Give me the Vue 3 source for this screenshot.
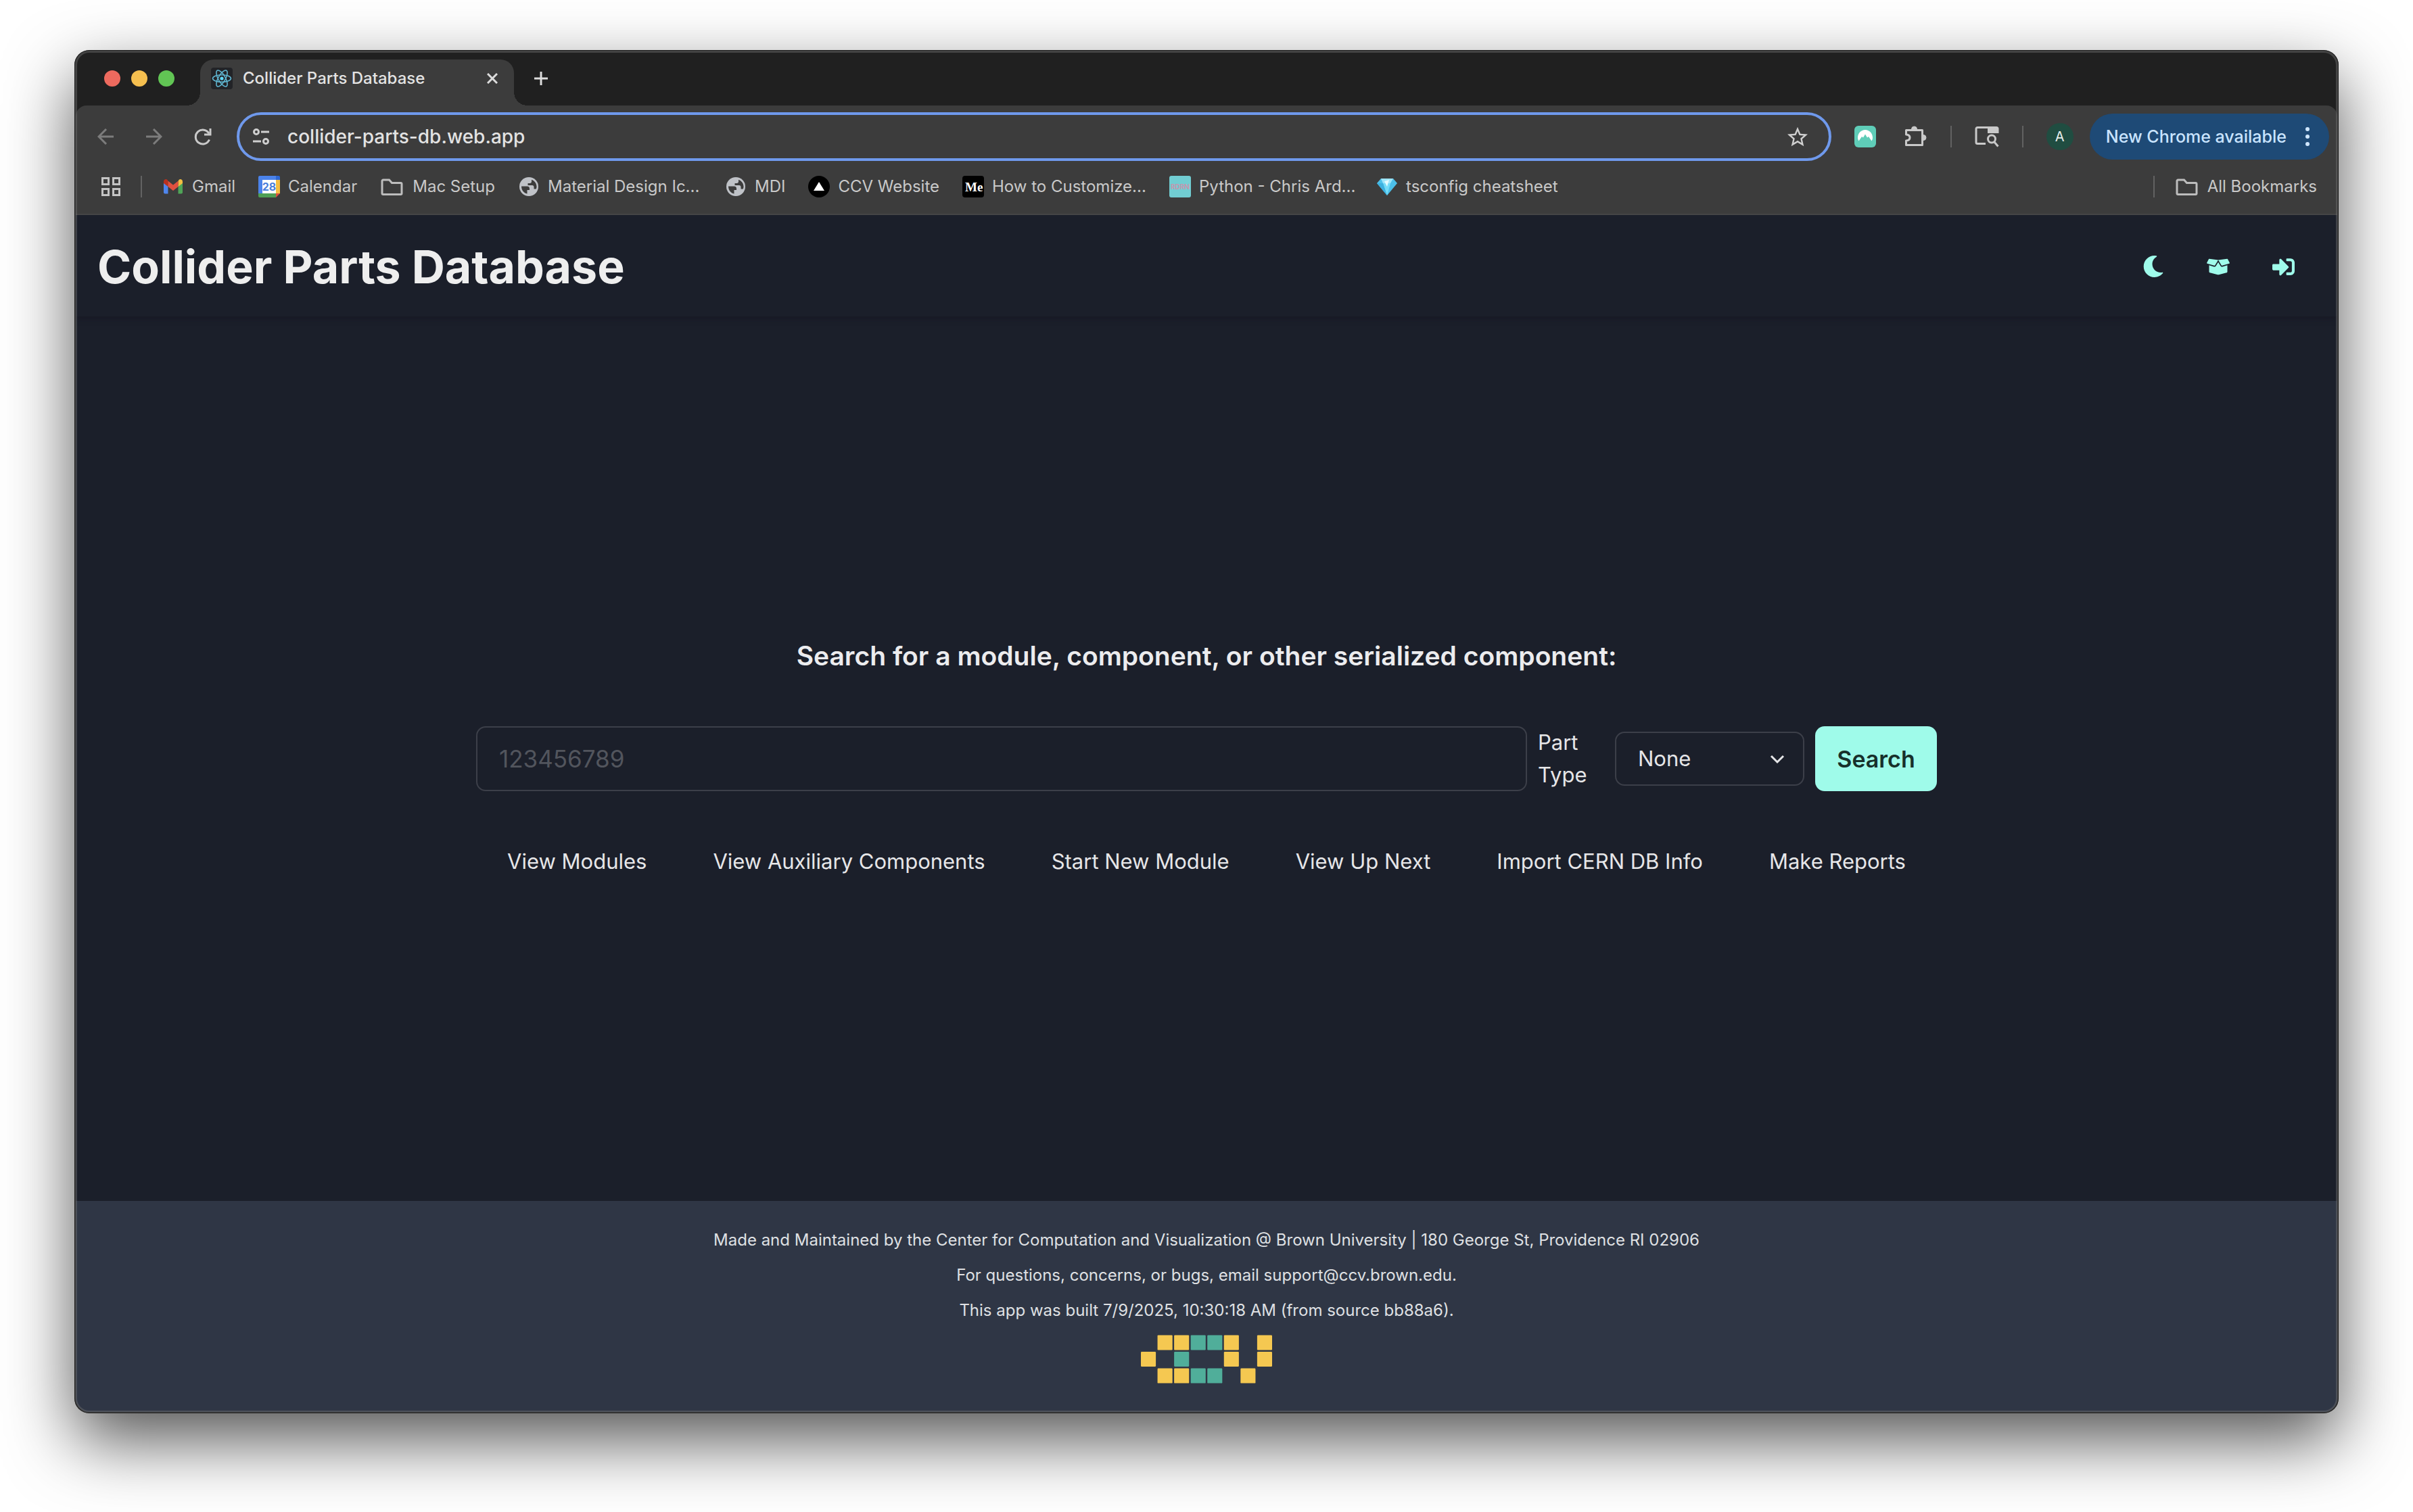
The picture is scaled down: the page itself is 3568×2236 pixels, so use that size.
<script setup>
import { ref } from 'vue'

const address = ref('collider-parts-db.web.app')
const serial = ref('')
const partType = ref('None')

const bookmarks = [
  { icon: 'gmail', label: 'Gmail' },
  { icon: 'calendar', label: 'Calendar' },
  { icon: 'folder', label: 'Mac Setup' },
  { icon: 'globe', label: 'Material Design Ic...', long: true },
  { icon: 'globe', label: 'MDI' },
  { icon: 'ccv', label: 'CCV Website' },
  { icon: 'medium', label: 'How to Customize...', long: true },
  { icon: 'ardrn', label: 'Python - Chris Ard...', long: true },
  { icon: 'gem', label: 'tsconfig cheatsheet' }
]

const links = [
  'View Modules',
  'View Auxiliary Components',
  'Start New Module',
  'View Up Next',
  'Import CERN DB Info',
  'Make Reports'
]

// Logo mosaic: y = yellow tile, t = teal tile, . = empty
const mosaic = ['.yytty.y', 'y.t..y.y', '.yytt.y.']
const tiles = mosaic.flatMap((row, r) =>
  [...row].map((kind, c) => ({ kind, x: c * 10, y: r * 10 })).filter((t) => t.kind !== '.')
)
</script>

<template>
  <div class="desktop">
    <div class="window">
      <div class="tab-strip">
        <div class="lights">
          <button class="light close" aria-label="Close window"></button>
          <button class="light minimise" aria-label="Minimise window"></button>
          <button class="light zoom" aria-label="Zoom window"></button>
        </div>
        <div class="tab">
          <svg class="favicon" viewBox="0 0 32 32">
            <rect width="32" height="32" rx="4" fill="#222327" />
            <g fill="none" stroke="#5fb4cf" stroke-width="1.6">
              <ellipse cx="16" cy="16" rx="13.5" ry="5.2" transform="rotate(0 16 16)" />
              <ellipse cx="16" cy="16" rx="13.5" ry="5.2" transform="rotate(60 16 16)" />
              <ellipse cx="16" cy="16" rx="13.5" ry="5.2" transform="rotate(120 16 16)" />
            </g>
            <circle cx="16" cy="16" r="2.6" fill="#61dafb" />
          </svg>
          <span class="tab-title">Collider Parts Database</span>
          <button class="plain tab-close" aria-label="Close tab">
            <svg width="16" height="16" viewBox="0 0 16 16"><path d="M1 1l14 14M15 1L1 15" stroke="#dcdcdc" stroke-width="3" /></svg>
          </button>
        </div>
        <button class="plain new-tab" aria-label="New tab">
          <svg width="20" height="20" viewBox="0 0 20 20"><path d="M10 0v20M0 10h20" stroke="#dcdcdc" stroke-width="3" /></svg>
        </button>
      </div>

      <div class="toolbar">
        <div class="nav-row">
          <button class="plain nav" aria-label="Back">
            <svg width="24" height="24" viewBox="0 0 24 24" fill="none" stroke="#7c7c7c" stroke-width="3"><path d="M24 12H2M13 1L2 12l11 11" /></svg>
          </button>
          <button class="plain nav" aria-label="Forward">
            <svg width="24" height="24" viewBox="0 0 24 24" fill="none" stroke="#7c7c7c" stroke-width="3"><path d="M0 12h22M11 1l11 11-11 11" /></svg>
          </button>
          <button class="plain nav" aria-label="Reload">
            <svg width="26" height="26" viewBox="0 0 26 26" fill="none" stroke="#c9c9c9" stroke-width="3"><path d="M22.500 17.500A10.500 10.500 0 1 1 22 8.500" /><path d="M24 1v9h-9" /></svg>
          </button>
          <div class="omnibox">
            <svg width="24" height="24" viewBox="0 0 24 24" fill="none" stroke="#cfcfcf" stroke-width="3">
              <circle cx="5" cy="5" r="3.500" /><path d="M12 5h12M0 19h12" /><circle cx="19" cy="19" r="3.500" />
            </svg>
            <input v-model="address" class="address" type="text" aria-label="Address" />
            <button class="plain" aria-label="Bookmark this tab">
              <svg width="30" height="30" viewBox="2 1.500 20 20" fill="#cfcfcf"><path d="M22 9.240l-7.190-.62L12 2 9.190 8.630 2 9.240l5.460 4.730L5.820 21 12 17.270 18.180 21l-1.630-7.030L22 9.240zM12 15.400l-3.760 2.270 1-4.280-3.320-2.880 4.380-.38L12 6.100l1.710 4.040 4.380.38-3.320 2.880 1 4.280L12 15.400z" /></svg>
            </button>
          </div>
          <div class="extensions">
            <button class="plain ext" aria-label="Extension">
              <svg width="32" height="32" viewBox="0 0 32 32"><rect width="32" height="32" rx="6" fill="#5fcdb8" /><path d="M5 17.500C5 11 10 6 16 6s11 5 11 11.500c0 2-.6 3.500-1.500 5L21 16l-2 1.500-3-5-3 5-2-1.500-4.500 6.500C5.600 21 5 19.500 5 17.500z" fill="#fff" /></svg>
            </button>
            <button class="plain puzzle" aria-label="Extensions">
              <svg width="34" height="34" viewBox="0 0 34 34"><path d="M3.500 7.500h24v22h-24v-6.500q5.500-.5 5.500-4.500t-5.500-4.500z" fill="none" stroke="#c9c9c9" stroke-width="3" stroke-linejoin="round" /><path d="M11.500 6a4 4 0 0 1 8 0zM29 14.500a4 4 0 0 1 0 8z" fill="#c9c9c9" stroke="#c9c9c9" /></svg>
            </button>
            <span class="divider"></span>
            <button class="plain" aria-label="Side panel">
              <svg width="36" height="32" viewBox="0 0 36 32"><path d="M16 26.500H4a2 2 0 0 1-2-2V4.500a2 2 0 0 1 2-2h28a2 2 0 0 1 2 2V11" fill="none" stroke="#c9c9c9" stroke-width="3" /><path d="M19 2h15v9H19z" fill="#c9c9c9" /><circle cx="25" cy="19.500" r="5.500" fill="none" stroke="#c9c9c9" stroke-width="3" /><path d="M28.500 23.500l6 7" stroke="#c9c9c9" stroke-width="3" /></svg>
            </button>
            <span class="divider"></span>
            <button class="avatar" aria-label="Profile">A</button>
          </div>
          <button class="update">
            New Chrome available
            <svg width="16" height="30" viewBox="0 0 16 30" fill="#cfe6ff"><circle cx="8" cy="4" r="3" /><circle cx="8" cy="15" r="3" /><circle cx="8" cy="26" r="3" /></svg>
          </button>
        </div>

        <div class="bookmark-row">
          <button class="plain" aria-label="Tab groups">
            <svg width="28" height="28" viewBox="0 0 28 28" fill="none" stroke="#c4c4c4" stroke-width="3"><path d="M1.500 1.500h9v9h-9zM17.500 1.500h9v9h-9zM1.500 17.500h9v9h-9zM17.500 17.500h9v9h-9z" /></svg>
          </button>
          <span class="divider"></span>
          <nav class="bookmarks">
            <a v-for="b in bookmarks" :key="b.label" href="#" class="bookmark">
              <svg v-if="b.icon === 'gmail'" class="ico" viewBox="0 0 32 32">
                <path d="M2 9v15.500a2 2 0 0 0 2 2h4.500V13.500z" fill="#4f86ec" />
                <path d="M30 9v15.500a2 2 0 0 1-2 2h-4.500V13.500z" fill="#4fa457" />
                <path d="M23.500 8v8l6.500-5V8.500c0-3.200-3.500-4.500-5.500-2.500z" fill="#f2bf42" />
                <path d="M2 8.500V11l6.500 5V8L7.500 6C5.500 4 2 5.300 2 8.500z" fill="#b9311f" />
                <path d="M8.500 7.500v8.500l7.500 6 7.500-6V7.500L16 13.500z" fill="#e0503f" />
              </svg>
              <svg v-else-if="b.icon === 'calendar'" class="ico" viewBox="0 0 32 32">
                <path d="M2 0h24v6H0V2a2 2 0 0 1 2-2z" fill="#4b83ea" />
                <path d="M26 0h4a2 2 0 0 1 2 2v4h-6z" fill="#2d67d2" />
                <path d="M0 6h6v20H0z" fill="#4b83ea" />
                <path d="M26 6h6v20h-6z" fill="#f4bd42" />
                <path d="M0 26h26v6H2a2 2 0 0 1-2-2z" fill="#4e9f55" />
                <path d="M26 26h6l-6 6z" fill="#dd4f3f" />
                <path d="M6 6h20v20H6z" fill="#fff" />
                <text x="16" y="22" text-anchor="middle" font-size="16" font-weight="700" fill="#4b7fdc">28</text>
              </svg>
              <svg v-else-if="b.icon === 'folder'" class="ico wide" viewBox="0 0 36 32">
                <path d="M4.500 6h9l4 4.500h13a1.500 1.500 0 0 1 1.500 1.500v14a1.500 1.500 0 0 1-1.500 1.500h-26A1.500 1.500 0 0 1 3 26V7.500A1.500 1.500 0 0 1 4.500 6z" fill="none" stroke="#bdbdbd" stroke-width="3" />
              </svg>
              <svg v-else-if="b.icon === 'globe'" class="ico" viewBox="0 0 32 32">
                <circle cx="16" cy="16" r="14" fill="#bfc2c7" />
                <path d="M5 15.500h8.500c2.500 0 3.500 1.500 3.500 3.500v2h-3.500v5.500C8.500 25.500 5 21 5 15.500z" fill="#3c3c3c" />
                <path d="M20 5.800v2.700c0 1.500-1 2.500-2.500 2.500h-3v3h6.500c1.500 0 2.500 1 2.500 2.500v3h3.200c.7-1.500.8-2.500.8-3.500 0-4.600-3-8.600-7.500-10.200z" fill="#3c3c3c" />
              </svg>
              <svg v-else-if="b.icon === 'ccv'" class="ico" viewBox="0 0 32 32">
                <circle cx="16" cy="16" r="16" fill="#000" />
                <path d="M16 9l8 13H8z" fill="#fff" />
              </svg>
              <svg v-else-if="b.icon === 'medium'" class="ico" viewBox="0 0 32 32">
                <rect width="32" height="32" rx="4" fill="#000" />
                <text class="serif" x="4" y="23" font-size="19" font-weight="700" fill="#fff">Me</text>
              </svg>
              <svg v-else-if="b.icon === 'ardrn'" class="ico" viewBox="0 0 32 32">
                <rect width="32" height="32" rx="3" fill="#71cdd2" />
                <text x="16" y="20" text-anchor="middle" font-size="10" font-weight="700" fill="#c795ae">RDRN</text>
              </svg>
              <svg v-else class="ico" viewBox="0 0 32 32">
                <path d="M7 4h18l6 7-15 18L1 11z" fill="#4cc0ea" />
                <path d="M7 4h18l-4 7H10z" fill="#9fe6fb" />
                <path d="M10 11h11l-5 18z" fill="#74dcf8" />
                <path d="M1 11h9l6 18z" fill="#3cb1e0" />
                <path d="M12 8l7-2-3 10z" fill="#e4fbff" />
              </svg>
              <span :class="{ long: b.long }">{{ b.label }}</span>
            </a>
          </nav>
          <span class="divider"></span>
          <a href="#" class="bookmark">
            <svg class="ico wide" viewBox="0 0 36 32">
              <path d="M4.500 6h9l4 4.500h13a1.500 1.500 0 0 1 1.500 1.500v14a1.500 1.500 0 0 1-1.500 1.500h-26A1.500 1.500 0 0 1 3 26V7.500A1.500 1.500 0 0 1 4.500 6z" fill="none" stroke="#bdbdbd" stroke-width="3" />
            </svg>
            <span>All Bookmarks</span>
          </a>
        </div>
      </div>

      <div class="page">
        <header class="header">
          <h1>Collider Parts Database</h1>
          <div class="actions">
            <button class="plain action" aria-label="Toggle theme">
              <svg width="32" height="32" viewBox="0 0 512 512"><path d="M283.211 512c78.962 0 151.079-35.925 198.857-94.792 7.068-8.708-.639-21.430-11.562-19.350-124.203 23.654-238.262-71.576-238.262-196.954 0-72.222 38.662-138.635 101.498-174.394 9.686-5.512 7.250-20.197-3.756-22.230A258.156 258.156 0 0 0 283.211 0c-141.309 0-256 114.511-256 256 0 141.309 114.511 256 256 256z" /></svg>
            </button>
            <button class="plain action" aria-label="Parts">
              <svg width="34" height="27" viewBox="0 0 640 512"><path d="M425.700 256c-16.900 0-32.800-9-41.400-23.400L320 126l-64.200 106.600c-8.700 14.500-24.600 23.500-41.500 23.500-4.500 0-9-.6-13.300-1.900L64 215v178c0 14.700 10 27.500 24.200 31l216.200 54.100c10.200 2.500 20.900 2.500 31 0L551.800 424c14.200-3.600 24.200-16.400 24.200-31V215l-137 39.100c-4.300 1.300-8.800 1.900-13.300 1.900zm212.600-112.200L586.800 41c-3.100-6.200-9.800-9.800-16.700-8.900L320 64l91.700 152.100c3.800 6.300 11.400 9.300 18.500 7.300l197.900-56.500c9.900-2.900 14.700-13.900 10.200-23.100zM53.200 41L1.700 143.800c-4.600 9.200.3 20.200 10.100 23l197.900 56.500c7.100 2 14.700-1 18.500-7.300L320 64 69.800 32.100c-6.900-.8-13.500 2.700-16.600 8.900z" /></svg>
            </button>
            <button class="plain action" aria-label="Sign in">
              <svg width="33" height="33" viewBox="0 0 512 512"><path d="M416 448h-84c-6.600 0-12-5.400-12-12v-40c0-6.600 5.400-12 12-12h84c17.700 0 32-14.300 32-32V160c0-17.700-14.300-32-32-32h-84c-6.600 0-12-5.400-12-12V76c0-6.600 5.400-12 12-12h84c53 0 96 43 96 96v192c0 53-43 96-96 96zm-47-201L201 79c-15-15-41-4.500-41 17v96H24c-13.300 0-24 10.700-24 24v96c0 13.300 10.700 24 24 24h136v96c0 21.500 26 32 41 17l168-168c9.300-9.400 9.300-24.600 0-34z" /></svg>
            </button>
          </div>
        </header>

        <main class="main">
          <label class="prompt" for="serial">Search for a module, component, or other serialized component:</label>
          <form class="search" @submit.prevent>
            <input id="serial" v-model="serial" class="serial" type="text" placeholder="123456789" />
            <label class="type-label" for="part-type">Part Type</label>
            <div class="select-wrap">
              <select id="part-type" v-model="partType">
                <option>None</option>
                <option>Module</option>
              </select>
              <svg class="chevron" width="22" height="14" viewBox="0 0 22 14" fill="none" stroke="#e6e6e8" stroke-width="3"><path d="M2 2l9 9 9-9" /></svg>
            </div>
            <button class="submit" type="submit">Search</button>
          </form>
          <nav class="links">
            <a v-for="l in links" :key="l" href="#">{{ l }}</a>
          </nav>
        </main>

        <footer class="footer">
          <p>Made and Maintained by the Center for Computation and Visualization @ Brown University | 180 George St, Providence RI 02906</p>
          <p>For questions, concerns, or bugs, email <a href="mailto:support@ccv.brown.edu">support@ccv.brown.edu</a>.</p>
          <p>This app was built 7/9/2025, 10:30:18 AM (from source bb88a6).</p>
          <svg class="logo" width="194" height="72" viewBox="0 0 79 29">
            <rect v-for="t in tiles" :key="t.x + '-' + t.y" :x="t.x" :y="t.y" width="9" height="9" rx="0.5" :fill="t.kind === 'y' ? '#f5c851' : '#50ae9a'" />
          </svg>
        </footer>
      </div>
    </div>
  </div>
</template>

<style>
body {
  margin: 0;
  background: #fff;
}
</style>

<style scoped>
* {
  box-sizing: border-box;
}
.desktop {
  display: flex;
  min-height: 100vh;
  padding: 74px 110px 146px;
  font-family: Inter, "Liberation Sans", sans-serif;
  font-size: 24px;
  line-height: 32px;
}
.window {
  position: relative;
  display: flex;
  flex: 1;
  flex-direction: column;
  min-width: 0;
  padding: 2px;
  border-radius: 22px;
  background: #202020;
  box-shadow: 0 40px 100px rgba(0, 0, 0, 0.67);
  overflow: hidden;
}
.window::after {
  content: "";
  position: absolute;
  inset: 0;
  border-radius: 22px;
  box-shadow: inset 0 0 0 1px #1c1c1c, inset 0 0 0 4px rgba(120, 120, 120, 0.4);
  pointer-events: none;
}
button {
  font-family: inherit;
  cursor: pointer;
}
svg {
  display: block;
  flex: none;
}
a {
  color: inherit;
  text-decoration: none;
}
.plain {
  display: flex;
  align-items: center;
  justify-content: center;
  padding: 0;
  border: 0;
  background: none;
}

/* Tab strip */
.tab-strip {
  display: flex;
  align-items: center;
  height: 80px;
  padding-left: 42px;
}
.lights {
  display: flex;
  gap: 16px;
  margin-right: 38px;
}
.light {
  width: 24px;
  height: 24px;
  padding: 0;
  border: 0;
  border-radius: 50%;
}
.light.close {
  background: #ed6a5e;
}
.light.minimise {
  background: #f5bf4f;
}
.light.zoom {
  background: #61c554;
}
.tab {
  position: relative;
  display: flex;
  align-items: center;
  align-self: flex-end;
  width: 464px;
  height: 68px;
  padding: 0 24px 12px 16px;
  border-radius: 20px 20px 0 0;
  background: #3c3c3c;
}
.tab::before,
.tab::after {
  content: "";
  position: absolute;
  bottom: 0;
  width: 20px;
  height: 20px;
}
.tab::before {
  right: 100%;
  background: radial-gradient(circle at 0 0, transparent 20px, #3c3c3c 20px);
}
.tab::after {
  left: 100%;
  background: radial-gradient(circle at 100% 0, transparent 20px, #3c3c3c 20px);
}
.favicon {
  width: 32px;
  height: 32px;
  margin-right: 15px;
}
.tab-title {
  flex: 1;
  color: #e3e3e3;
  font-weight: 500;
  white-space: nowrap;
}
.new-tab {
  margin-left: 30px;
}

/* Toolbar */
.toolbar {
  padding-bottom: 12px;
  border-bottom: 2px solid #464646;
  border-radius: 16px 16px 0 0;
  background: #3c3c3c;
}
.nav-row {
  display: flex;
  align-items: center;
  height: 92px;
  padding: 0 12px 0 8px;
}
.nav {
  width: 72px;
  height: 72px;
}
.omnibox {
  display: flex;
  flex: 1;
  align-items: center;
  height: 72px;
  margin: 0 28px 0 14px;
  padding: 0 31px 0 20px;
  border: 4px solid #6f99ec;
  border-radius: 36px;
}
.address {
  flex: 1;
  min-width: 0;
  margin-left: 27px;
  padding: 0;
  border: 0;
  outline: 0;
  background: none;
  color: #e3e3e3;
  font: 500 28px/40px Inter, "Liberation Sans", sans-serif;
}
.extensions {
  display: flex;
  align-items: center;
  gap: 34px;
}
.ext {
  width: 44px;
}
.puzzle {
  width: 36px;
}
.divider {
  flex: none;
  width: 2px;
  height: 32px;
  background: #626262;
}
.avatar {
  width: 40px;
  height: 40px;
  padding: 0;
  border: 0;
  border-radius: 50%;
  background: #204d41;
  color: #e8efec;
  font-size: 20px;
}
.update {
  display: flex;
  align-items: center;
  gap: 23px;
  height: 68px;
  margin-left: 24px;
  padding: 0 24px;
  border: 0;
  border-radius: 34px;
  background: #1e4a76;
  color: #c9e4ff;
  font-size: 25px;
  font-weight: 500;
  white-space: nowrap;
}
.bookmark-row {
  display: flex;
  align-items: center;
  height: 56px;
  padding: 0 30px 0 38px;
}
.bookmark-row .divider {
  margin: 0 30px;
}
.bookmarks {
  display: flex;
  flex: 1;
  gap: 34px;
}
.bookmark {
  display: flex;
  align-items: center;
  gap: 12px;
  color: #c9c9c9;
  white-space: nowrap;
}
.long {
  width: 228px;
}
.ico {
  width: 32px;
  height: 32px;
}
.wide {
  width: 36px;
}
.serif {
  font-family: "Liberation Serif", serif;
}

/* Page */
.page {
  display: flex;
  flex: 1;
  flex-direction: column;
  overflow: hidden;
  border-radius: 0 0 20px 20px;
  background: #1b1f2a;
  color: #e6e6e8;
}
.header {
  display: flex;
  align-items: center;
  justify-content: space-between;
  height: 150px;
  padding: 2px 32px 0;
  box-shadow: 0 2px 8px rgba(20, 16, 28, 0.5);
}
h1 {
  margin: 0;
  color: #eee;
  font-size: 68px;
  font-weight: 700;
  line-height: 80px;
}
.actions {
  display: flex;
}
.action {
  width: 96px;
  height: 96px;
  fill: #9ffbea;
}
.main {
  display: flex;
  flex: 1;
  flex-direction: column;
  align-items: center;
  justify-content: center;
  padding-bottom: 4px;
}
.prompt {
  margin-bottom: 76px;
  color: #ececee;
  font-size: 39px;
  font-weight: 600;
  line-height: 56px;
}
.search {
  display: flex;
  align-items: center;
  width: 100%;
  max-width: 2160px;
  margin-bottom: 80px;
}
.serial {
  flex: 1;
  min-width: 0;
  height: 96px;
  padding: 0 32px;
  border: 2px solid #3c3f49;
  border-radius: 14px;
  background: transparent;
  color: #e6e6e8;
  font: 35px/48px Inter, "Liberation Sans", sans-serif;
}
.serial::placeholder {
  color: #52555d;
}
.type-label {
  width: 130px;
  padding: 0 40px 0 16px;
  font-size: 31px;
  line-height: 48px;
}
.select-wrap {
  position: relative;
  width: 280px;
}
select {
  width: 100%;
  height: 80px;
  padding: 0 32px;
  border: 2px solid #3c3f49;
  border-radius: 14px;
  appearance: none;
  background: transparent;
  color: #e6e6e8;
  font: 31px/48px Inter, "Liberation Sans", sans-serif;
}
.chevron {
  position: absolute;
  top: 34px;
  right: 29px;
  pointer-events: none;
}
.submit {
  width: 180px;
  height: 96px;
  margin-left: 16px;
  padding: 0;
  border: 0;
  border-radius: 14px;
  background: #9ffbea;
  color: #17302b;
  font-size: 34px;
  font-weight: 600;
}
.links {
  display: flex;
  gap: 98px;
  font-size: 31px;
  line-height: 48px;
}
.footer {
  display: flex;
  flex-direction: column;
  align-items: center;
  padding: 32px 0 42px;
  background: #2f3645;
  color: #dfe0e3;
}
.footer p {
  margin: 0;
  line-height: 52px;
}
.logo {
  margin-top: 10px;
}
</style>
